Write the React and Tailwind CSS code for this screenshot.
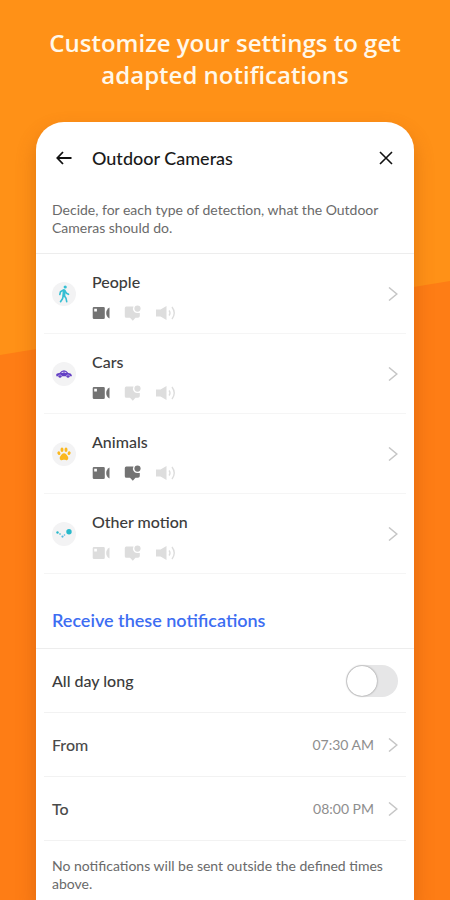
import React, { useState } from 'react';

const detections = [
    { name: 'People', icon: <PersonIcon />, video: true, notify: false, sound: false },
    { name: 'Cars', icon: <CarIcon />, video: true, notify: false, sound: false },
    { name: 'Animals', icon: <PawIcon />, video: true, notify: true, sound: false },
    { name: 'Other motion', icon: <MotionIcon />, video: false, notify: false, sound: false },
];

const App = () => {
    const [allDay, setAllDay] = useState(false);

    return (
        <div className="relative isolate flex min-h-screen flex-col bg-[#ff9117] px-9 pt-[27px] font-['Lato','Open_Sans',sans-serif]">
            {/* Darker slanted backdrop */}
            <div className="absolute inset-0 -z-10 bg-[#fe7d15] [clip-path:polygon(0_39.4%,100%_31.2%,100%_100%,0_100%)]"></div>

            <h1 className="text-center font-['Open_Sans',sans-serif] text-2xl font-semibold leading-8 text-[#fff8ea]">
                Customize your settings to get adapted notifications
            </h1>

            <main className="mt-[31px] flex-1 rounded-t-[28px] bg-white pb-2 shadow-[0_10px_20px_rgba(150,60,0,0.3)]">
                <header className="flex h-[72px] items-center px-4">
                    <button aria-label="Back" className="flex w-6 justify-center text-[#111]">
                        <svg width="18" height="16" viewBox="0 0 18 16" fill="none" stroke="currentColor" strokeWidth="1.8">
                            <path d="M16.500 8H2.500M8 2L2.300 8 8 14" />
                        </svg>
                    </button>
                    <h2 className="ml-4 flex-1 text-lg font-medium leading-6 text-[#1a1a1a]">Outdoor Cameras</h2>
                    <button aria-label="Close" className="flex w-6 justify-center text-[#111]">
                        <svg width="14" height="14" viewBox="0 0 14 14" fill="none" stroke="currentColor" strokeWidth="1.6">
                            <path d="M1 1l12 12M13 1L1 13" />
                        </svg>
                    </button>
                </header>

                <p className="border-b border-[#ededed] px-4 pb-4 pt-[7px] text-sm leading-[18px] text-[#6a6a6a]">
                    Decide, for each type of detection, what the Outdoor Cameras should do.
                </p>

                <ul className="px-2">
                    {detections.map((item) => (
                        <DetectionRow key={item.name} {...item} />
                    ))}
                </ul>

                <h3 className="border-b border-[#ededed] px-4 pb-4 pt-[34px] text-lg font-semibold leading-6 text-[#3d6df2]">
                    Receive these notifications
                </h3>

                <div className="px-2">
                    <label className="flex h-16 items-center justify-between border-b border-[#f2f2f2] px-2 text-base font-medium text-[#3c3c3c]">
                        All day long
                        <input
                            type="checkbox"
                            role="switch"
                            checked={allDay}
                            onChange={(e) => setAllDay(e.target.checked)}
                            className="flex h-8 w-13 appearance-none rounded-full bg-[#e6e6e7] p-px before:size-[30px] before:rounded-full before:bg-white before:shadow-[0_0_2px_rgba(0,0,0,0.5)] checked:bg-[#3d6df2] checked:before:translate-x-5"
                        />
                    </label>
                    <TimeRow label="From" value="07:30 AM" />
                    <TimeRow label="To" value="08:00 PM" />
                </div>

                <p className="px-4 pt-4 text-sm leading-[18px] text-[#6a6a6a]">
                    No notifications will be sent outside the defined times above.
                </p>
            </main>
        </div>
    );
};

const DetectionRow = ({ name, icon, video, notify, sound }) => (
    <li className="border-b border-[#f5f5f5]">
        <button className="flex h-[79px] w-full items-center px-2 text-left">
            <span className="flex size-6 items-center justify-center rounded-full bg-[#f3f3f4]">{icon}</span>
            <span className="ml-4 flex flex-1 flex-col gap-[11px] pt-1">
                <span className="text-base font-medium leading-6 text-[#3c3c3c]">{name}</span>
                <span className="flex gap-3.5">
                    <VideoIcon className={video ? 'text-[#737373]' : 'text-[#dddddd]'} />
                    <NotifyIcon className={notify ? 'text-[#737373]' : 'text-[#dddddd]'} />
                    <SoundIcon className={sound ? 'text-[#737373]' : 'text-[#dddddd]'} />
                </span>
            </span>
            <Chevron />
        </button>
    </li>
);

const TimeRow = ({ label, value }) => (
    <button className="flex h-16 w-full items-center border-b border-[#f2f2f2] px-2 text-left">
        <span className="flex-1 text-base font-medium text-[#4a4a4a]">{label}</span>
        <span className="mr-3.5 text-sm text-[#8e8e8e]">{value}</span>
        <Chevron />
    </button>
);

const Chevron = () => (
    <svg width="10" height="14" viewBox="0 0 10 14" fill="none" stroke="#c6c6c6" strokeWidth="1.5">
        <path d="M1 .5L8.800 7 1 13.500" />
    </svg>
);

function VideoIcon({ className }) {
    return (
        <svg className={className} width="18" height="16" viewBox="0 0 18 16" fill="currentColor">
            <path fillRule="evenodd" d="M2 2h9.500a1.300 1.300 0 0 1 1.300 1.300v9.400a1.300 1.300 0 0 1-1.300 1.300H2a1.300 1.300 0 0 1-1.300-1.300V3.300A1.300 1.300 0 0 1 2 2zm.2 1.800v2.700h2.700V3.800z" />
            <path d="M17.500 2.500v11Q14.200 11.500 14.200 8t3.300-5.500z" />
        </svg>
    );
}

function NotifyIcon({ className }) {
    return (
        <svg className={className} width="18" height="16" viewBox="0 0 18 16" fill="currentColor">
            <path d="M2.300 1.500H9.500a4.300 4.300 0 0 0 .1 4.600A3.900 3.900 0 0 0 13 8h2.800v3a1.800 1.800 0 0 1-1.800 1.800h-2.500L8.800 15.800 6 12.800H2.300A1.500 1.500 0 0 1 .8 11.300V3A1.500 1.500 0 0 1 2.300 1.500z" />
            <circle cx="13.500" cy="3.600" r="3.100" />
        </svg>
    );
}

function SoundIcon({ className }) {
    return (
        <svg className={className} width="20" height="16" viewBox="0 0 20 16" fill="none">
            <path d="M0 4.500h4.500L10.500 1v14l-6-3.500H0z" fill="currentColor" />
            <path d="M13 5.500q2 2.500 0 5M16 2q4.500 6 0 12" stroke="currentColor" strokeWidth="1.400" />
        </svg>
    );
}

function PersonIcon() {
    return (
        <svg width="12" height="18" viewBox="0 0 12 18" fill="none" stroke="#35bfd3" strokeWidth="1.600" strokeLinecap="round" strokeLinejoin="round">
            <circle cx="7.200" cy="2" r="1.600" fill="#35bfd3" stroke="none" />
            <path d="M6.200 5.800L5.800 10.500" strokeWidth="3" />
            <path d="M5.500 5L2.500 6.800 1.800 9.500M7 6l1.500 2.300 2 1M5.300 10.800l-.8 2.900-2 3M6.300 10.800l1.700 2.400.7 3.500" />
        </svg>
    );
}

function CarIcon() {
    return (
        <svg width="16" height="10" viewBox="0 0 16 10">
            <path d="M.3 7.300V5Q2 4.200 3.500 4 5.500 1.200 8 1.200q2.500 0 4.300 2.800 2.800.3 3.500 1.900v1.400z" fill="#6440c4" />
            <path d="M5 4.100q1-1.600 2.500-1.700v1.700zM8.500 2.400q1.400.2 2.300 1.700H8.500z" fill="#d6cdf1" />
            <circle cx="4" cy="7.300" r="1.500" fill="#6440c4" />
            <circle cx="12" cy="7.300" r="1.500" fill="#6440c4" />
            <path d="M2.200 6.700q1.800-1.800 3.600 0M10.200 6.700q1.800-1.800 3.600 0" stroke="#d6cdf1" strokeWidth=".6" fill="none" />
        </svg>
    );
}

function PawIcon() {
    return (
        <svg width="14" height="14" viewBox="0 0 14 14" fill="#fbb81f">
            <ellipse cx="1.900" cy="6.200" rx="1.400" ry="1.900" transform="rotate(-20 1.900 6.200)" />
            <ellipse cx="5" cy="2.800" rx="1.500" ry="2.200" />
            <ellipse cx="9" cy="2.800" rx="1.500" ry="2.200" />
            <ellipse cx="12.100" cy="6.200" rx="1.400" ry="1.900" transform="rotate(20 12.100 6.200)" />
            <path d="M7 6.300c2 0 2.400 1.500 3.600 2.900 1.300 1.500.7 4-1.300 4-1 0-1.400-.4-2.300-.4s-1.300.4-2.300.4c-2 0-2.600-2.500-1.300-4C4.600 7.800 5 6.300 7 6.300z" />
        </svg>
    );
}

function MotionIcon() {
    return (
        <svg width="16" height="10" viewBox="0 0 16 10" fill="#28b9ca">
            <circle cx="1.500" cy="3.500" r="1.200" />
            <circle cx="4" cy="5" r=".8" />
            <circle cx="6.500" cy="7.600" r="1.100" fill="#56b8de" />
            <circle cx="8.500" cy="6" r=".8" fill="#56b8de" />
            <circle cx="13" cy="2.800" r="2.700" />
        </svg>
    );
}

export default App;
